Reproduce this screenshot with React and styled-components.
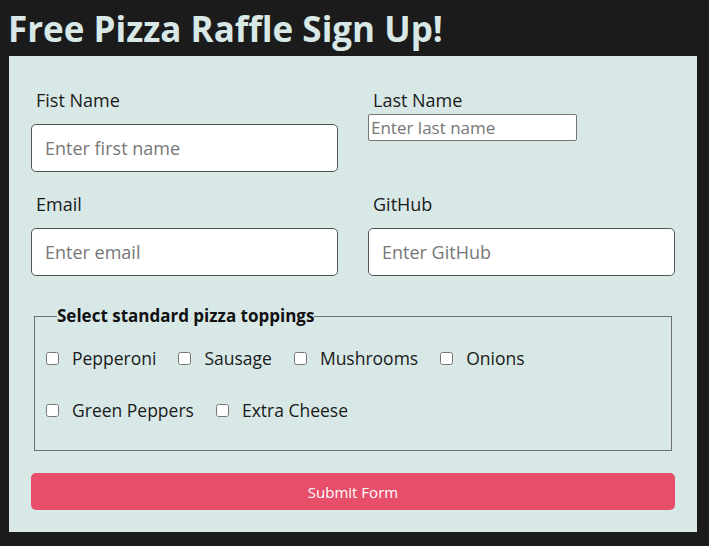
import React from 'react';
import styled, { createGlobalStyle } from 'styled-components';

const PANEL = '#d8e8e7';
const ACCENT = '#e64e69';

const GlobalStyle = createGlobalStyle`
  body {
    margin: 8px;
    background: #1b1b1b;
    font-family: "Open Sans", "Noto Sans", sans-serif;
  }
`;

const Title = styled.h1`
  margin: 0 0 6px;
  font-size: 35px;
  line-height: 42px;
  font-weight: 700;
  color: ${PANEL};
`;

const Panel = styled.form`
  width: 688px;
  margin-left: 1px;
  box-sizing: border-box;
  background: ${PANEL};
  padding: 32px 22px 22px;
  display: flex;
  flex-direction: column;
`;

const Grid = styled.div`
  display: grid;
  grid-template-columns: 1fr 1fr;
  column-gap: 30px;
  row-gap: 20px;
  align-items: start;
`;

const Field = styled.div`
  display: flex;
  flex-direction: column;
  align-items: flex-start;
`;

const Label = styled.label`
  padding-left: 5px;
  font-size: 18px;
  line-height: 24px;
  color: #1a1a1a;
`;

const Input = styled.input`
  box-sizing: border-box;
  width: 100%;
  height: 48px;
  margin-top: 12px;
  padding: 0 13px;
  border: 1px solid #555;
  border-radius: 5px;
  background: #fff;
  font-family: inherit;
  font-size: 18px;
  color: #222;
  &::placeholder {
    color: #777;
  }
`;

const PlainInput = styled.input`
  box-sizing: border-box;
  width: 209px;
  height: 27px;
  margin-top: 2px;
  padding: 1px 2px;
  border: 1px solid #767676;
  border-radius: 2px;
  background: #fff;
  font-family: inherit;
  font-size: 17px;
  &::placeholder {
    color: #777;
  }
`;

const Toppings = styled.fieldset`
  margin: 28px 3px 0;
  padding: 18px 11px 28px;
  border: 1px solid #707070;
  display: flex;
  flex-wrap: wrap;
  row-gap: 28px;
`;

const Legend = styled.legend`
  margin-left: 11px;
  padding: 0;
  font-size: 17px;
  line-height: 24px;
  font-weight: 700;
  color: #111;
`;

const Option = styled.label`
  display: flex;
  align-items: center;
  height: 24px;
  margin-right: 22px;
  font-size: 17.5px;
  color: #1a1a1a;
`;

const Box = styled.input`
  width: 13px;
  height: 13px;
  margin: 0 13px 0 0;
`;

const Submit = styled.button`
  margin-top: 22px;
  height: 37px;
  border: none;
  border-radius: 5px;
  background: ${ACCENT};
  color: #fff;
  font-family: inherit;
  font-size: 15px;
  cursor: pointer;
`;

const toppings = ['Pepperoni', 'Sausage', 'Mushrooms', 'Onions', 'Green Peppers', 'Extra Cheese'];

const App = () => (
  <>
    <GlobalStyle />
    <Title>Free Pizza Raffle Sign Up!</Title>
    <Panel onSubmit={(e) => e.preventDefault()}>
      <Grid>
        <Field>
          <Label htmlFor="first">Fist Name</Label>
          <Input id="first" placeholder="Enter first name" />
        </Field>
        <Field>
          <Label htmlFor="last">Last Name</Label>
          <PlainInput id="last" placeholder="Enter last name" />
        </Field>
        <Field>
          <Label htmlFor="email">Email</Label>
          <Input id="email" placeholder="Enter email" />
        </Field>
        <Field>
          <Label htmlFor="github">GitHub</Label>
          <Input id="github" placeholder="Enter GitHub" />
        </Field>
      </Grid>
      <Toppings>
        <Legend>Select standard pizza toppings</Legend>
        {toppings.map((t) => (
          <Option key={t}>
            <Box type="checkbox" />
            {t}
          </Option>
        ))}
      </Toppings>
      <Submit type="submit">Submit Form</Submit>
    </Panel>
  </>
);

export default App;
